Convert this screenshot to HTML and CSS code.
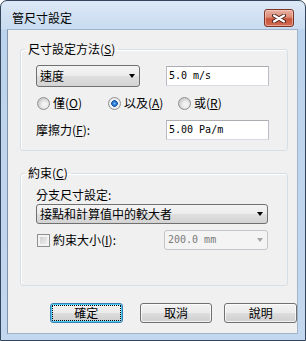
FILE: index.html
```html
<!DOCTYPE html>
<html lang="zh-Hant">
<head>
  <meta charset="UTF-8">
  <title>管尺寸設定</title>
  <link rel="stylesheet" href="styles.css">
</head>
<body>

  <div class="window">
    <div class="titlebar">
      <span class="title">管尺寸設定</span>
      <button class="close-btn" title="關閉">
        <svg width="14" height="9" viewBox="0 0 14 9">
          <path d="M2 1.5 L12 7.5 M12 1.5 L2 7.5" stroke="#4a2119" stroke-width="4" stroke-linecap="round"/>
          <path d="M2 1.5 L12 7.5 M12 1.5 L2 7.5" stroke="#ffffff" stroke-width="2.2" stroke-linecap="round"/>
        </svg>
      </button>
    </div>

    <div class="client">
      <!-- sizing method -->
      <fieldset class="group group-method">
        <legend>尺寸設定方法(<u>S</u>)</legend>
        <div class="row row-top">
          <div class="combo combo-method"><span class="combo-text">速度</span><i class="arrow"></i></div>
          <div class="textbox">5.0 m/s</div>
        </div>
        <div class="row radios">
          <label class="radio r-only"><span class="dot"></span><span>僅(<u>O</u>)</span></label>
          <label class="radio r-and checked"><span class="dot"></span><span>以及(<u>A</u>)</span></label>
          <label class="radio r-or"><span class="dot"></span><span>或(<u>R</u>)</span></label>
        </div>
        <div class="row row-friction">
          <span class="field-label">摩擦力(<u>F</u>):</span>
          <div class="textbox">5.00 Pa/m</div>
        </div>
      </fieldset>

      <!-- constraint -->
      <fieldset class="group group-limit">
        <legend>約束(<u>C</u>)</legend>
        <div class="caption">分支尺寸設定:</div>
        <div class="combo combo-wide"><span class="combo-text">接點和計算值中的較大者</span><i class="arrow"></i></div>
        <div class="row row-limit">
          <label class="check"><span class="box"></span><span>約束大小(<u>I</u>):</span></label>
          <div class="combo combo-size disabled"><span class="combo-text mono">200.0 mm</span><i class="arrow"></i></div>
        </div>
      </fieldset>

      <div class="buttons">
        <button class="btn default">確定</button>
        <button class="btn btn-cancel">取消</button>
        <button class="btn btn-help">說明</button>
      </div>
    </div>
  </div>

</body>
</html>
```

FILE: styles.css
```css
* { box-sizing: border-box; }

body {
  margin: 0;
  background: #ffffff;
  color: #000000;
  font-family: "Noto Sans CJK TC", sans-serif;
  font-size: 12px;
  line-height: 16px;
}
u { text-decoration: underline; text-underline-offset: 1px; }

/* ---------------- Window frame ---------------- */
.window {
  width: 306px;
  height: 341px;
  display: flex;
  flex-direction: column;
  padding: 0 7px 6px 6px;
  border: 1px solid #34465b;
  border-radius: 7px 7px 0 0;
  background: linear-gradient(#dce8f6 0, #c8dbf0 28px, #bcd3ed 29px, #c3d7ee 100%);
}
.titlebar {
  flex: none;
  height: 28px;
  display: flex;
  align-items: flex-start;
}
.title {
  margin: 9px 0 0 5px;
  line-height: 16px;
}
.close-btn {
  margin: 8px 4px 0 auto;
  width: 30px;
  height: 18px;
  padding: 0;
  display: flex;
  align-items: center;
  justify-content: center;
  border: 1px solid #7c3427;
  border-radius: 3px;
  background: linear-gradient(#eab2a4 0%, #dc8a75 45%, #c8553c 55%, #d26c52 100%);
  box-shadow: inset 0 0 0 1px rgba(255, 220, 210, .5);
}

.client {
  flex: 1;
  background: #f0f0f0;
  border: 1px solid #9fb3cb;
  border-left-color: #7f93ab;
  padding: 11px 0 0 12px;
}

/* ---------------- Group boxes ---------------- */
.group {
  margin: 0;
  width: 268px;
  border: 1px solid #d5dfe5;
  border-radius: 3px;
  box-shadow: inset 1px 1px 0 #ffffff;
  padding: 8px 0 10px 15px;
}
.group legend {
  margin-left: -11px;
  padding: 0 3px;
  line-height: 16px;
}
.group-limit { margin-top: 14px; padding: 6px 0 35px 15px; }

.row { display: flex; align-items: center; }
.row-top { height: 22px; }
.radios { height: 16px; margin-top: 8px; }
.row-friction { height: 20px; margin-top: 9px; }
.field-label { width: 130px; }

/* ---------------- Controls ---------------- */
.combo {
  display: flex;
  align-items: center;
  height: 22px;
  padding: 0 4px 0 3px;
  border: 1px solid #707070;
  border-radius: 3px;
  background: linear-gradient(#f4f4f4 0%, #ececec 48%, #dfdfdf 52%, #d3d3d3 100%);
}
.combo-text { flex: 1; white-space: nowrap; }
.arrow {
  width: 0;
  height: 0;
  border-left: 3.5px solid transparent;
  border-right: 3.5px solid transparent;
  border-top: 4px solid #000000;
}
.combo-method { width: 104px; margin-right: 26px; }
.combo-wide { width: 232px; height: 20px; margin-top: 1px; }
.combo-size { width: 104px; height: 20px; }
.combo.disabled {
  border-color: #c2c5c9;
  background: #f4f4f4;
  color: #7a7a7a;
}
.combo.disabled .arrow { border-top-color: #a6a6a6; }

.textbox {
  width: 103px;
  height: 20px;
  display: flex;
  align-items: center;
  padding-left: 2px;
  border: 1px solid #b9bcc2;
  border-top-color: #abadb3;
  border-bottom-color: #d6dbe2;
  background: #ffffff;
  font-family: "DejaVu Sans Mono", monospace;
  font-size: 10px;
}
.mono { font-family: "DejaVu Sans Mono", monospace; font-size: 10px; }

.radio, .check { display: flex; align-items: center; gap: 3px; }
.r-only { width: 71px; margin-left: 1px; }
.r-and { width: 70px; }
.dot {
  width: 13px;
  height: 13px;
  border: 1px solid #8e8f8f;
  border-radius: 50%;
  background: radial-gradient(circle at 60% 60%, #f6f6f6 0, #ececec 3px, #cfcfcf 6px);
}
.radio.checked .dot {
  background: radial-gradient(circle at 50% 50%, #7fc4f5 0, #2c7fd6 1.6px, #1a55a6 3px, #e9e9e9 3.6px, #f6f6f6 4.6px, #cfcfcf 6.5px);
}

.caption { line-height: 16px; }
.row-limit { height: 20px; margin-top: 6px; }
.check { width: 127px; margin-left: 1px; }
.box {
  width: 13px;
  height: 13px;
  border: 1px solid #8e8f8f;
  background: linear-gradient(135deg, #c9c9c9, #f4f4f4);
  box-shadow: inset 0 0 0 2px #f3f3f3;
}

/* ---------------- Buttons ---------------- */
.buttons {
  display: flex;
  margin-top: 17px;
  padding-left: 30px;
}
.btn {
  width: 73px;
  height: 20px;
  padding: 0;
  font-family: inherit;
  font-size: 12px;
  line-height: 16px;
  color: #000000;
  border: 1px solid #707070;
  border-radius: 3px;
  background: linear-gradient(#f2f2f2 0%, #ebebeb 48%, #dddddd 52%, #cfcfcf 100%);
  box-shadow: inset 0 0 0 1px rgba(255, 255, 255, .7);
}
.btn.default {
  border-color: #3c7fb1;
  box-shadow: inset 0 0 0 1px #48cdf8;
  outline: 1px dotted #000000;
  outline-offset: -3px;
}
.btn-cancel { margin-left: 17px; }
.btn-help { margin-left: 12px; }
```
